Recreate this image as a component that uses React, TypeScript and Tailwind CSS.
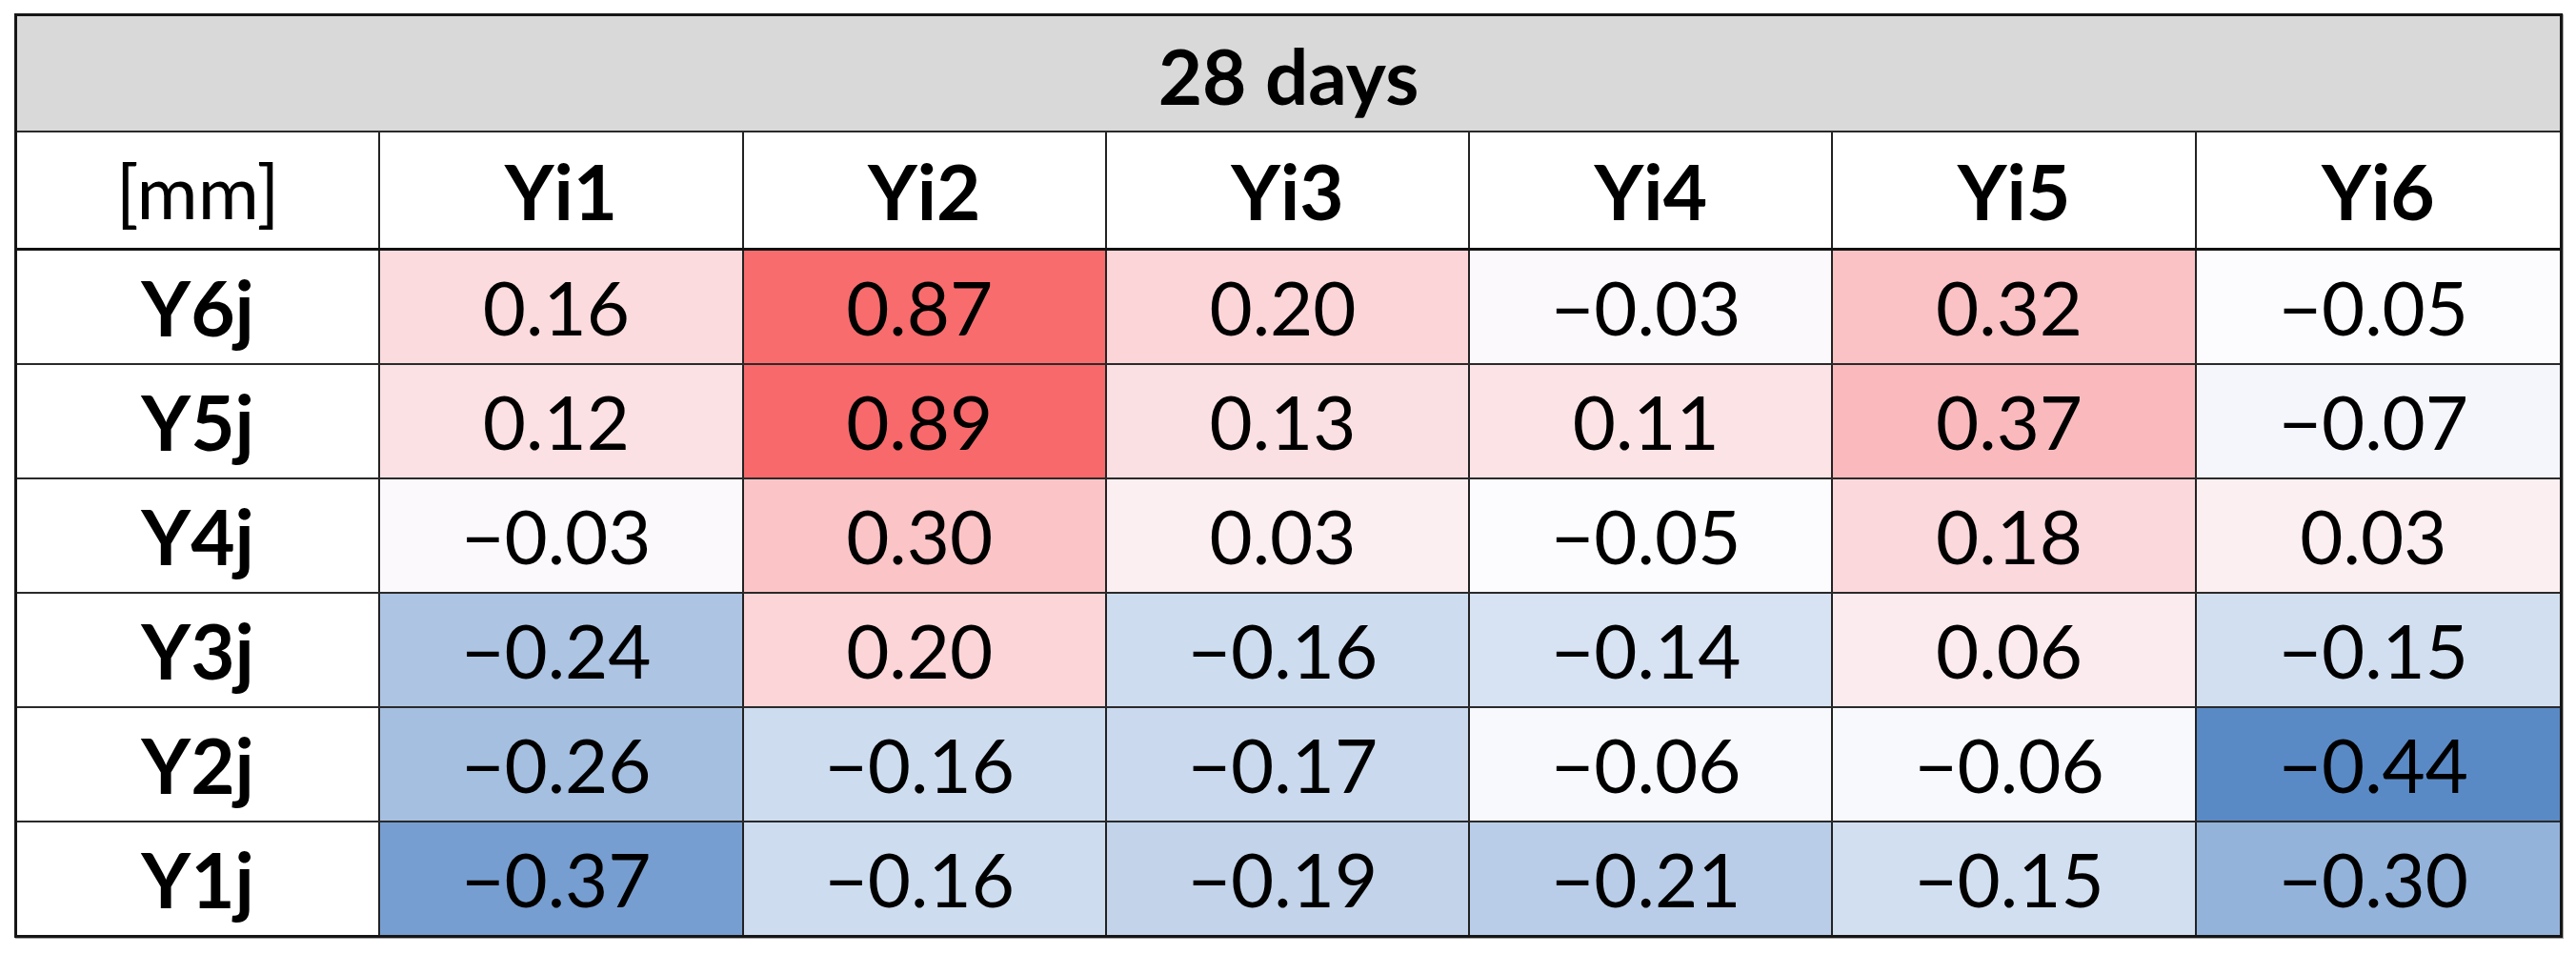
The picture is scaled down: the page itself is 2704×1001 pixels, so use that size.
import React from "react";

type Cell = { v: string; bg: string };

const rows: { label: string; cells: Cell[] }[] = [
  {
    label: "Y6j",
    cells: [
      { v: "0.16", bg: "bg-[#FBDBDE]" },
      { v: "0.87", bg: "bg-[#F86C6E]" },
      { v: "0.20", bg: "bg-[#FBD5D8]" },
      { v: "\u22120.03", bg: "bg-[#FCF9FC]" },
      { v: "0.32", bg: "bg-[#FAC2C5]" },
      { v: "\u22120.05", bg: "bg-[#FCFCFF]" },
    ],
  },
  {
    label: "Y5j",
    cells: [
      { v: "0.12", bg: "bg-[#FBE1E4]" },
      { v: "0.89", bg: "bg-[#F8696B]" },
      { v: "0.13", bg: "bg-[#FBE0E3]" },
      { v: "0.11", bg: "bg-[#FBE3E6]" },
      { v: "0.37", bg: "bg-[#FABABD]" },
      { v: "\u22120.07", bg: "bg-[#F4F6FC]" },
    ],
  },
  {
    label: "Y4j",
    cells: [
      { v: "\u22120.03", bg: "bg-[#FCF9FC]" },
      { v: "0.30", bg: "bg-[#FBC5C8]" },
      { v: "0.03", bg: "bg-[#FCEFF2]" },
      { v: "\u22120.05", bg: "bg-[#FCFCFF]" },
      { v: "0.18", bg: "bg-[#FBD8DB]" },
      { v: "0.03", bg: "bg-[#FCEFF2]" },
    ],
  },
  {
    label: "Y3j",
    cells: [
      { v: "\u22120.24", bg: "bg-[#ADC4E3]" },
      { v: "0.20", bg: "bg-[#FBD5D8]" },
      { v: "\u22120.16", bg: "bg-[#CEDCEF]" },
      { v: "\u22120.14", bg: "bg-[#D7E2F2]" },
      { v: "0.06", bg: "bg-[#FCEBEE]" },
      { v: "\u22120.15", bg: "bg-[#D2DFF0]" },
    ],
  },
  {
    label: "Y2j",
    cells: [
      { v: "\u22120.26", bg: "bg-[#A5BFE0]" },
      { v: "\u22120.16", bg: "bg-[#CEDCEF]" },
      { v: "\u22120.17", bg: "bg-[#CAD9ED]" },
      { v: "\u22120.06", bg: "bg-[#F8F9FD]" },
      { v: "\u22120.06", bg: "bg-[#F8F9FD]" },
      { v: "\u22120.44", bg: "bg-[#5A8AC6]" },
    ],
  },
  {
    label: "Y1j",
    cells: [
      { v: "\u22120.37", bg: "bg-[#779ED0]" },
      { v: "\u22120.16", bg: "bg-[#CEDCEF]" },
      { v: "\u22120.19", bg: "bg-[#C2D3EA]" },
      { v: "\u22120.21", bg: "bg-[#BACDE8]" },
      { v: "\u22120.15", bg: "bg-[#D2DFF0]" },
      { v: "\u22120.30", bg: "bg-[#94B3DB]" },
    ],
  },
];

const heads = ["Yi1", "Yi2", "Yi3", "Yi4", "Yi5", "Yi6"];

export default function App() {
  return (
    <div className="w-[2704px] h-[1001px] bg-white pt-[14px] pl-[15px] font-['Lato','Liberation_Sans',sans-serif] text-black">
      <div className="w-[2675px] border-[3px] border-[#161616] shadow-[1px_1px_0_#a0a0a0] flex flex-col">
        <div className="h-[122px] bg-[#D9D9D9] border-b-2 border-[#2a2a2a] flex items-center justify-center">
          <span className="text-[80px] font-bold leading-none pt-[4px]">28 days</span>
        </div>
        <div className="h-[124px] grid grid-cols-7 border-b-[3px] border-[#111]">
          <div className="flex items-center justify-center border-r-2 border-[#222] bg-white">
            <span className="text-[78px] leading-none">[mm]</span>
          </div>
          {heads.map((h, i) => (
            <div
              key={h}
              className={`flex items-center justify-center bg-white ${i < 5 ? "border-r-2 border-[#222]" : ""}`}
            >
              <span className="text-[80px] font-bold leading-none">{h}</span>
            </div>
          ))}
        </div>
        {rows.map((r, ri) => (
          <div
            key={r.label}
            className={`grid grid-cols-7 ${ri < 5 ? "h-[120px] border-b-2 border-[#2a2a2a]" : "h-[118px]"}`}
          >
            <div className="flex items-center justify-center border-r-2 border-[#222] bg-white">
              <span className="text-[80px] font-bold leading-none">{r.label}</span>
            </div>
            {r.cells.map((c, ci) => (
              <div
                key={ci}
                className={`flex items-center justify-center ${c.bg} ${ci < 5 ? "border-r-2 border-[#222]" : ""}`}
              >
                <span className="text-[78px] leading-none pr-[10px]">{c.v}</span>
              </div>
            ))}
          </div>
        ))}
      </div>
    </div>
  );
}
